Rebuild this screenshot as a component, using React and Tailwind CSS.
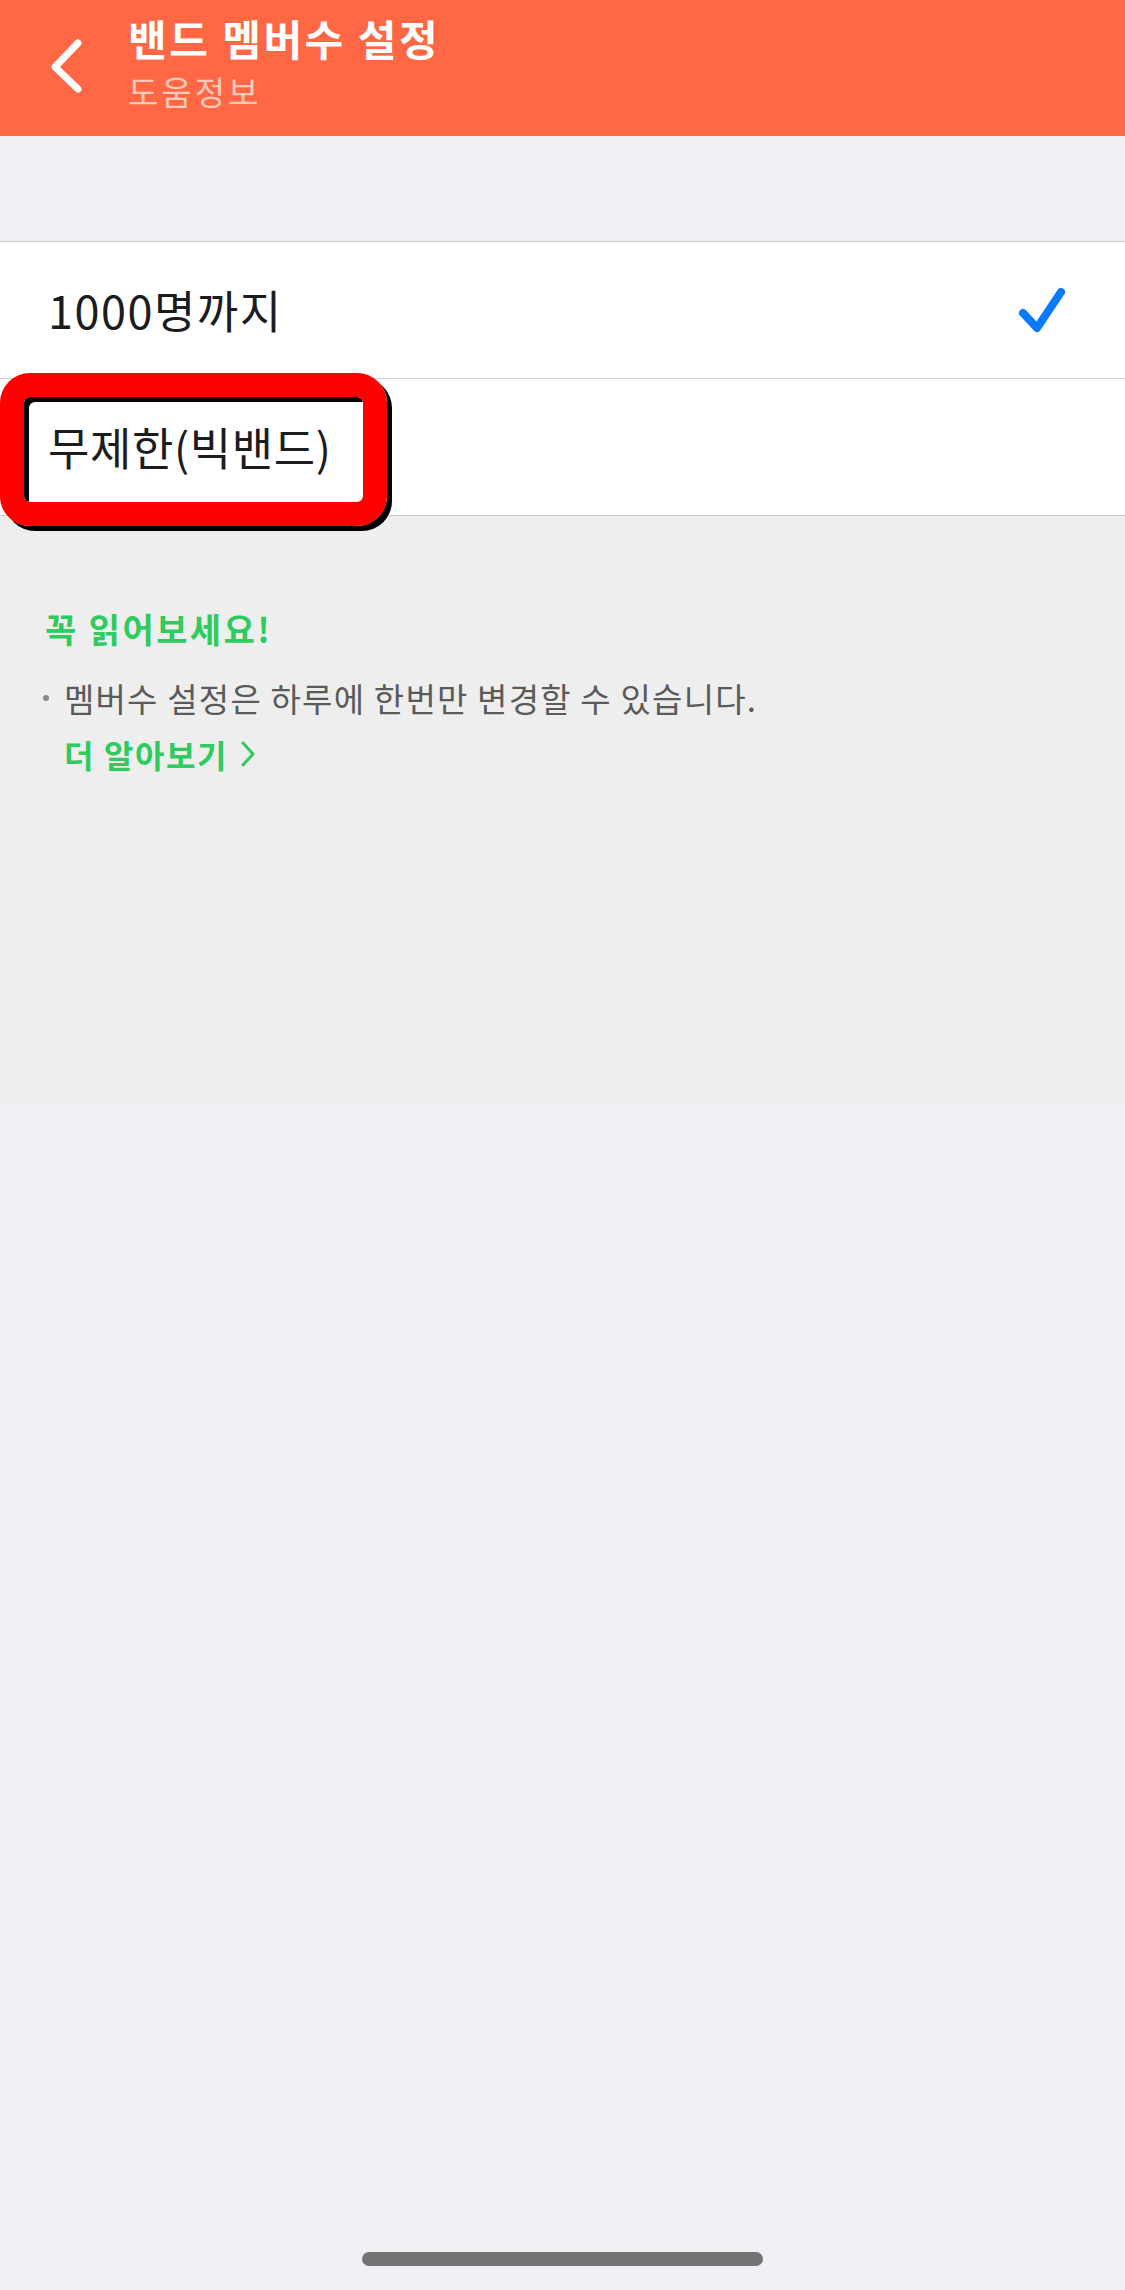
import React from "react";

const FONT = { fontFamily: '"Noto Sans CJK KR", "Noto Sans", sans-serif' };

export default function App() {
  return (
    <div
      className="relative w-[1125px] h-[2290px] bg-[#F0EFF4] flex flex-col overflow-hidden"
      style={FONT}
    >
      {/* Header */}
      <div className="h-[136px] bg-[#FF6745] flex items-start shrink-0">
        <div className="ml-[50px] mt-[38px] w-[36px] h-[56px]">
          <svg width="36" height="56" viewBox="0 0 36 56" fill="none">
            <path
              d="M28 5 L5 29 L28 51"
              stroke="#ffffff"
              strokeWidth="7"
              strokeLinecap="round"
              strokeLinejoin="round"
            />
          </svg>
        </div>
        <div className="ml-[42px] pt-[13px] flex flex-col">
          <div className="text-[42px] leading-[50px] font-bold text-white tracking-[2.5px]">
            밴드 멤버수 설정
          </div>
          <div className="mt-[8px] text-[33px] leading-[40px] text-[#FFC9BA] tracking-[3px]">
            도움정보
          </div>
        </div>
      </div>

      {/* Gap */}
      <div className="h-[105px] shrink-0" />

      {/* Options */}
      <div className="bg-white border-t border-[#C8C7CC] shrink-0">
        <div className="h-[137px] flex items-center justify-between pl-[48px] pr-[60px] border-b border-[#D1D0D5]">
          <span className="text-[45px] text-[#1c1c1e] tracking-[1.5px]">1000명까지</span>
          <svg width="48" height="48" viewBox="0 0 48 48" fill="none">
            <path
              d="M6 27 L20 42 L44 6"
              stroke="#0A7AFF"
              strokeWidth="8"
              strokeLinecap="round"
              strokeLinejoin="round"
            />
          </svg>
        </div>
        <div className="h-[137px] flex items-center pl-[48px] border-b border-[#C8C7CC]">
          <span className="text-[45px] text-[#1c1c1e] tracking-[0.6px]">무제한(빅밴드)</span>
        </div>
      </div>

      {/* Notice */}
      <div className="h-[587px] bg-[#EEEEEE] pl-[43px] pt-[93px] shrink-0">
        <div className="ml-[2px] text-[34px] leading-[40px] font-bold text-[#2FCB5E] tracking-[2.4px]">
          꼭 읽어보세요!
        </div>
        <div className="mt-[29px] flex items-center text-[33px] leading-[40px] text-[#5A5A5A] tracking-[1.2px]">
          <span className="w-[21px] flex items-center">
            <span className="w-[6px] h-[6px] rounded-full bg-[#8a8a8a]" />
          </span>
          <span>멤버수 설정은 하루에 한번만 변경할 수 있습니다.</span>
        </div>
        <div className="mt-[16px] ml-[21px] flex items-center gap-[12px] text-[32px] leading-[40px] font-bold text-[#2FCB5E] tracking-[1.6px]">
          <span>더 알아보기</span>
          <svg width="16" height="30" viewBox="0 0 16 30" fill="none">
            <path
              d="M3 4 L13 15 L3 26"
              stroke="#2FCB5E"
              strokeWidth="3"
              strokeLinecap="round"
              strokeLinejoin="round"
            />
          </svg>
        </div>
      </div>

      {/* Home indicator */}
      <div className="flex-1 flex items-end justify-center pb-[24px]">
        <div className="w-[401px] h-[14px] rounded-full bg-[#737373]" />
      </div>

      {/* Red annotation box */}
      <div className="absolute left-0 top-[373px] w-[387px] h-[153px] border-[24px] border-[#FF0000] rounded-[30px] shadow-[5px_5px_0_#000,inset_5px_5px_0_#000]" />
    </div>
  );
}
